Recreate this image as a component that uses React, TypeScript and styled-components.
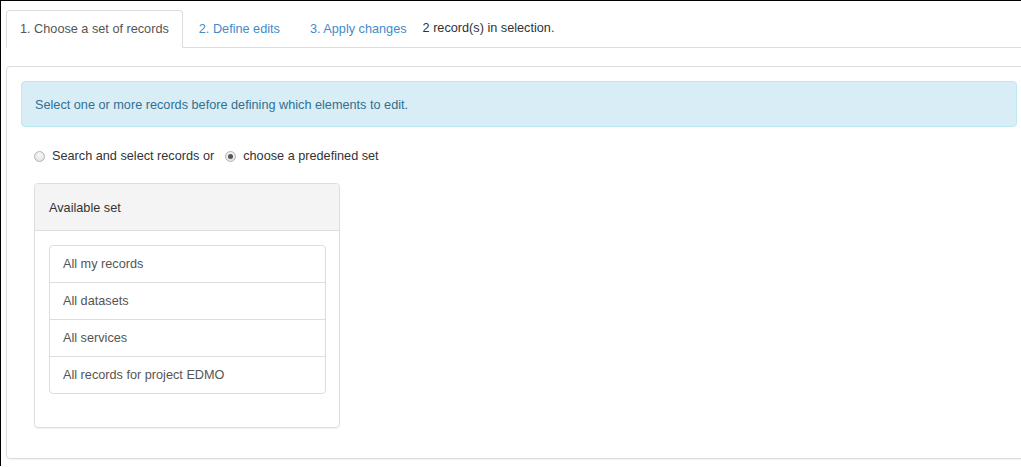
import React, { useState } from 'react';
import styled, { createGlobalStyle } from 'styled-components';

const GlobalStyle = createGlobalStyle`
  html, body {
    margin: 0;
    padding: 0;
    background: #fff;
    overflow: hidden;
  }
  body {
    font-family: "Liberation Sans", Arial, Helvetica, sans-serif;
    font-size: 12.7px;
    color: #333;
  }
`;

const Frame = styled.div`
  border-top: 1px solid #000;
  border-left: 1px solid #000;
  height: 466px;
  padding: 8px 0 0 5px;
  box-sizing: border-box;
`;

const Tabs = styled.ul`
  display: flex;
  align-items: flex-end;
  list-style: none;
  margin: 0;
  padding: 0;
  border-bottom: 1px solid #ddd;
`;

const Tab = styled.li<{ $active?: boolean }>`
  margin-bottom: -1px;
  margin-right: 2px;
  padding: 10px 13px;
  line-height: 16px;
  border: 1px solid ${p => (p.$active ? '#ddd' : 'transparent')};
  border-bottom-color: ${p => (p.$active ? '#fff' : 'transparent')};
  border-radius: 4px 4px 0 0;
  background: ${p => (p.$active ? '#fff' : 'transparent')};
  color: ${p => (p.$active ? '#555' : '#428bca')};
  cursor: pointer;
`;

const Selection = styled.li`
  line-height: 16px;
  padding: 11px 0;
  color: #333;
`;

const Panel = styled.div`
  margin-top: 18px;
  width: 1026px;
  border: 1px solid #ddd;
  border-radius: 4px;
  box-shadow: 0 1px 1px rgba(0, 0, 0, 0.05);
  padding: 14px 14px 30px 14px;
  box-sizing: border-box;
  height: 393px;
`;

const Alert = styled.div`
  background: #d9edf7;
  border: 1px solid #bce8f1;
  border-radius: 4px;
  color: #31708f;
  padding: 15px 13px 13px 13px;
  line-height: 16px;
`;

const Inner = styled.div`
  padding: 21px 13px 0 13px;
`;

const RadioRow = styled.div`
  display: flex;
  align-items: center;
  line-height: 16px;
`;

const RadioLabel = styled.label`
  display: flex;
  align-items: center;
  margin-right: 11px;
  cursor: pointer;
`;

const RadioDot = styled.span<{ $checked?: boolean }>`
  width: 11px;
  height: 11px;
  border-radius: 50%;
  box-sizing: border-box;
  border: 1px solid #b5b5b5;
  background: radial-gradient(circle at 50% 35%, #fafafa, #dcdcdc);
  margin-right: 7px;
  display: flex;
  align-items: center;
  justify-content: center;
  &::after {
    content: '';
    width: 5px;
    height: 5px;
    border-radius: 50%;
    background: #555;
    display: ${p => (p.$checked ? 'block' : 'none')};
  }
`;

const SetPanel = styled.div`
  margin-top: 19px;
  width: 306px;
  box-sizing: border-box;
  border: 1px solid #ddd;
  border-radius: 4px;
  box-shadow: 0 1px 1px rgba(0, 0, 0, 0.05);
`;

const SetHeading = styled.div`
  background: #f4f4f4;
  border-bottom: 1px solid #ddd;
  border-radius: 3px 3px 0 0;
  padding: 16px 14px 14px 14px;
  line-height: 16px;
  color: #333;
`;

const SetBody = styled.div`
  padding: 14px 13px 33px 14px;
`;

const ListGroup = styled.ul`
  list-style: none;
  margin: 0;
  padding: 0;
`;

const ListItem = styled.li`
  border: 1px solid #ddd;
  margin-bottom: -1px;
  padding: 10px 13px;
  line-height: 16px;
  color: #555;
  cursor: pointer;
  &:first-child {
    border-radius: 4px 4px 0 0;
  }
  &:last-child {
    border-radius: 0 0 4px 4px;
    margin-bottom: 0;
  }
`;

const sets = [
  'All my records',
  'All datasets',
  'All services',
  'All records for project EDMO'
];

export default function App() {
  const [mode, setMode] = useState('set');

  return (
    <>
      <GlobalStyle />
      <Frame>
        <Tabs>
          <Tab $active>1. Choose a set of records</Tab>
          <Tab>2. Define edits</Tab>
          <Tab>3. Apply changes</Tab>
          <Selection>2 record(s) in selection.</Selection>
        </Tabs>
        <Panel>
          <Alert>Select one or more records before defining which elements to edit.</Alert>
          <Inner>
            <RadioRow>
              <RadioLabel onClick={() => setMode('search')}>
                <RadioDot $checked={mode === 'search'} />
                Search and select records or
              </RadioLabel>
              <RadioLabel onClick={() => setMode('set')}>
                <RadioDot $checked={mode === 'set'} />
                choose a predefined set
              </RadioLabel>
            </RadioRow>
            <SetPanel>
              <SetHeading>Available set</SetHeading>
              <SetBody>
                <ListGroup>
                  {sets.map(s => (
                    <ListItem key={s}>{s}</ListItem>
                  ))}
                </ListGroup>
              </SetBody>
            </SetPanel>
          </Inner>
        </Panel>
      </Frame>
    </>
  );
}
